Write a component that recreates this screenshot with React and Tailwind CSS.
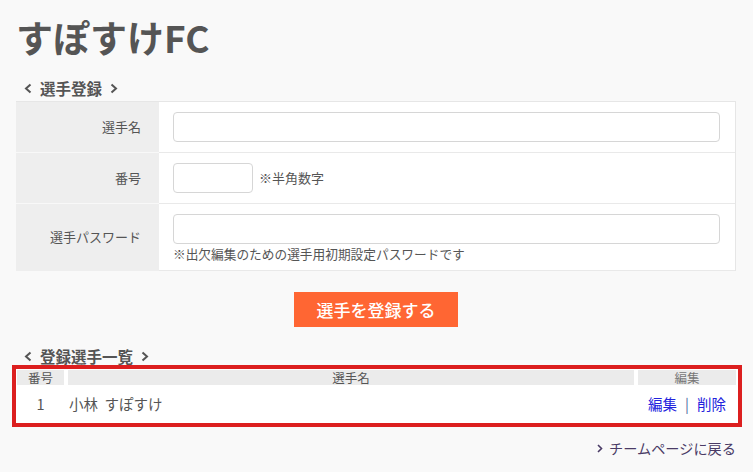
import React from "react";

function Chevron({ dir = "left", className = "" }) {
  return (
    <svg width="8" height="11" viewBox="0 0 8 11" className={className}>
      {dir === "left" ? (
        <path d="M6.5 1.5 L2 5.5 L6.5 9.5" fill="none" stroke="currentColor" strokeWidth="2" />
      ) : (
        <path d="M1.5 1.5 L6 5.5 L1.5 9.5" fill="none" stroke="currentColor" strokeWidth="2" />
      )}
    </svg>
  );
}

function Heading({ children, className = "" }) {
  return (
    <h2 className={`flex items-center gap-[8px] pl-[8px] text-[15.5px] font-bold text-[#555] ${className}`}>
      <Chevron dir="left" />
      <span>{children}</span>
      <Chevron dir="right" />
    </h2>
  );
}

export default function App() {
  return (
    <div className="min-h-[472px] bg-[#f9f9f9] px-4 text-[#555] font-['Noto_Sans_CJK_JP','Noto_Sans',sans-serif]">
      <h1 className="pt-[19px] text-[37px] leading-[36px] font-bold text-[#555]">すぽすけFC</h1>

      <Heading className="mt-[23px] leading-[20px]">選手登録</Heading>

      <div className="mt-[3px] w-[720px] border-t border-r border-[#e6e6e6] bg-white">
        <div className="flex h-[51px]">
          <div className="w-[143px] shrink-0 bg-[#eeeeee] border-b border-[#f8f8f8] flex items-center justify-end pr-[18px] text-[13px]">選手名</div>
          <div className="flex-1 border-b border-[#e9e9e9] flex items-center pl-[14px] pr-[15px]">
            <div className="h-[30px] w-full rounded-[4px] border border-[#d6d6d6] bg-white" />
          </div>
        </div>
        <div className="flex h-[51px]">
          <div className="w-[143px] shrink-0 bg-[#eeeeee] border-b border-[#f8f8f8] flex items-center justify-end pr-[18px] text-[13px]">番号</div>
          <div className="flex-1 border-b border-[#e9e9e9] flex items-center pl-[14px] gap-[6px]">
            <div className="h-[30px] w-[80px] rounded-[4px] border border-[#d6d6d6] bg-white" />
            <span className="text-[13px]">※半角数字</span>
          </div>
        </div>
        <div className="flex h-[67px]">
          <div className="w-[143px] shrink-0 bg-[#eeeeee] border-b border-[#eeeeee] flex items-center justify-end pr-[18px] text-[13px]">選手パスワード</div>
          <div className="flex-1 border-b border-[#e9e9e9] flex flex-col pl-[14px] pr-[15px] pt-[10px]">
            <div className="h-[30px] w-full rounded-[4px] border border-[#d6d6d6] bg-white" />
            <span className="mt-[2px] text-[12.7px] leading-[16px]">※出欠編集のための選手用初期設定パスワードです</span>
          </div>
        </div>
      </div>

      <div className="mt-[21px] flex justify-center w-[720px]">
        <button className="h-[35px] w-[164px] bg-[#ff6633] text-white text-[17px] font-medium flex items-center justify-center">選手を登録する</button>
      </div>

      <Heading className="mt-[21px] leading-[17px]">登録選手一覧</Heading>

      <div className="-ml-[4px] w-[730px] border-[4px] border-[#dc1f1f] bg-white pl-[1px] pr-[2px] pt-[1px]">
        <div className="flex gap-[4px] h-[15px] text-[12.5px] leading-[15px]">
          <div className="w-[47px] bg-[#ebebeb] text-center">番号</div>
          <div className="flex-1 bg-[#ebebeb] text-center">選手名</div>
          <div className="w-[98px] bg-[#ebebeb] text-center text-[#777]">編集</div>
        </div>
        <div className="flex gap-[4px] h-[38px] items-center text-[14.5px]">
          <div className="w-[47px] text-center">1</div>
          <div className="flex-1 pl-[1px]">小林&nbsp;&nbsp;すぽすけ</div>
          <div className="w-[98px] text-center">
            <span className="text-[#2222dd]">編集</span>
            <span className="mx-[8px] text-[#4a6aa0]">|</span>
            <span className="text-[#2222dd]">削除</span>
          </div>
        </div>
      </div>

      <div className="mt-[11px] w-[720px] flex justify-end items-center gap-[6px] text-[14.2px] leading-[20px] text-[#4a3b66]">
        <svg width="6" height="9" viewBox="0 0 6 9">
          <path d="M1 1 L4.5 4.5 L1 8" fill="none" stroke="currentColor" strokeWidth="1.6" />
        </svg>
        <span>チームページに戻る</span>
      </div>
    </div>
  );
}
